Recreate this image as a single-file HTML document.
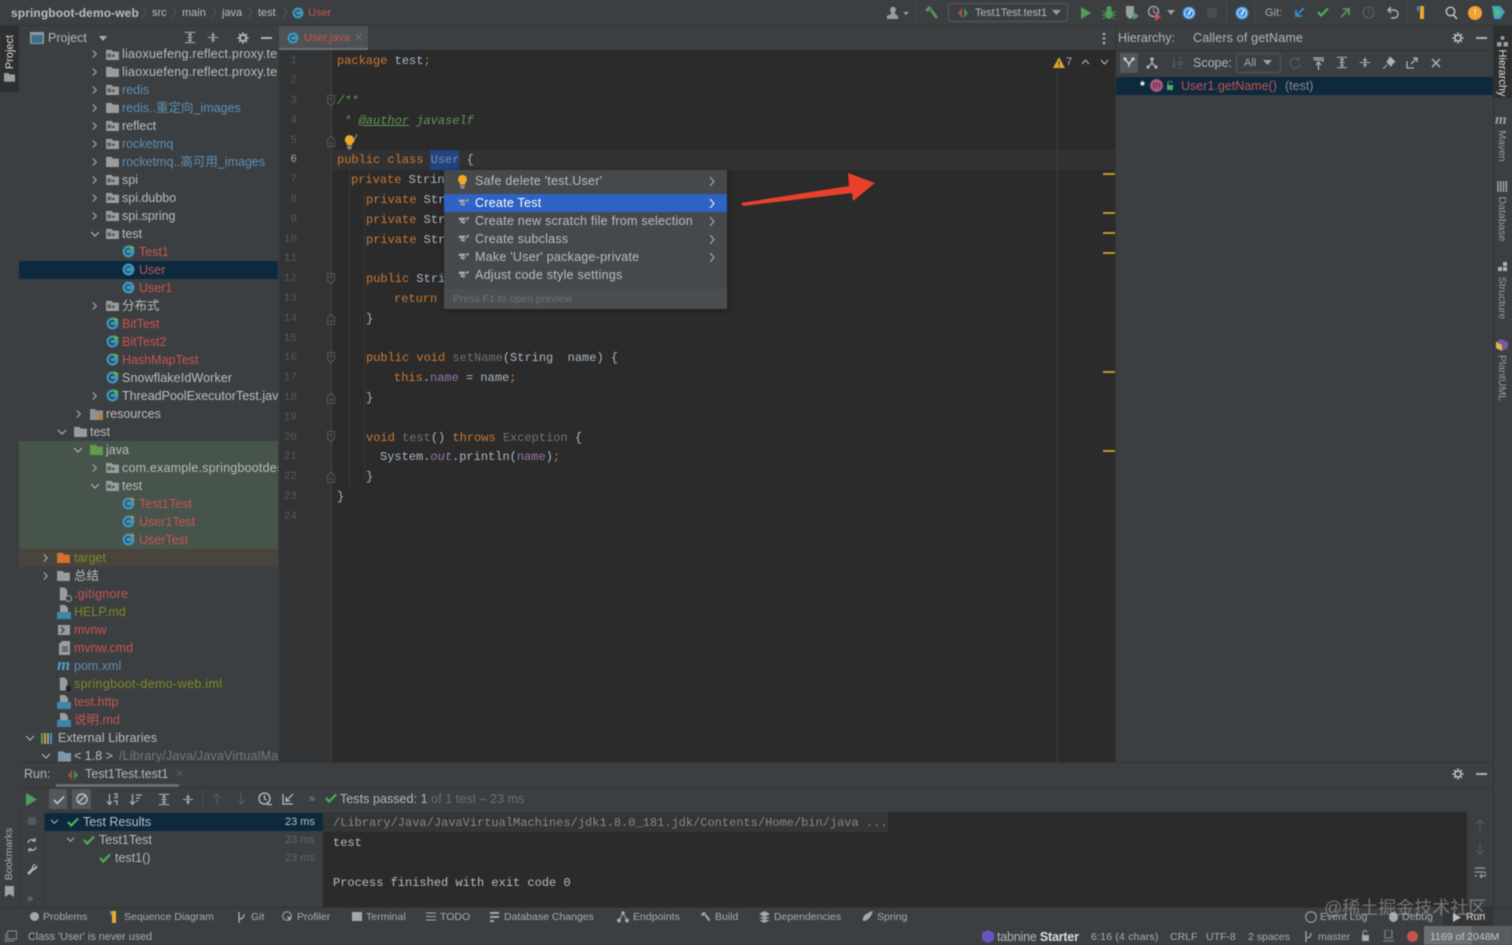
<!DOCTYPE html>
<html><head><meta charset="utf-8"><title>User.java</title>
<style>
html,body{margin:0;padding:0;background:#3c3f41;}
#a{position:relative;width:1512px;height:945px;overflow:hidden;background:#3c3f41;font-family:"Liberation Sans","Noto Sans CJK SC",sans-serif;font-size:12.5px;color:#bbb;filter:blur(.45px);}
#a div,#a svg.i{position:absolute;}
.t{white-space:pre;height:18px;line-height:18px;}
.u{letter-spacing:.25px;}
.m{white-space:pre;height:20px;line-height:20px;font-family:"Liberation Mono",monospace;font-size:12px;color:#a9b7c6;margin-top:1px;}
.n{width:30px;text-align:right;left:267px;font-size:11px;color:#55595b;font-family:"Liberation Mono",monospace;height:20px;line-height:20px;margin-top:1px;}
.k{color:#cc7832;}.g{color:#6f7375;}.p{color:#9876aa;}
.r{color:#c75450;}.b{color:#5e8eb4;}.o{color:#7f8b1e;}
.s{font-size:11px;}
.d{color:#777;}
</style></head><body><div id="a">
<svg width="0" height="0" style="position:absolute"><defs>
<symbol id="f" viewBox="0 0 14 12"><path d="M0 1h6l1.500 1.800H14V12H0z" fill="#9a9d9f"/></symbol>
<symbol id="pk" viewBox="0 0 14 12"><path d="M0 1h6l1.500 1.800H14V12H0z" fill="#9a9d9f"/><rect x="1.500" y="5" width="4" height="4" fill="#5a5d5f"/><circle cx="8" cy="7.500" r="1.300" fill="#3c3f41"/></symbol>
<symbol id="c" viewBox="0 0 14 14"><circle cx="7" cy="7" r="6.400" fill="#3f96bd"/><path d="M9.300 5.200A3 3 0 1 0 9.300 8.800" fill="none" stroke="#20404f" stroke-width="1.200"/></symbol>
<symbol id="cr" viewBox="0 0 14 14"><circle cx="7" cy="7" r="6.400" fill="#3f96bd"/><path d="M9.300 5.200A3 3 0 1 0 9.300 8.800" fill="none" stroke="#20404f" stroke-width="1.200"/><path d="M9 0l5 3-5 3z" fill="#62b543"/></symbol>
<symbol id="cu" viewBox="0 0 14 14"><circle cx="7" cy="7" r="6.400" fill="#3f96bd"/><path d="M9.300 5.200A3 3 0 1 0 9.300 8.800" fill="none" stroke="#20404f" stroke-width="1.200"/><path d="M10 0l4 2.500-4 2.500z" fill="#c98a3a"/></symbol>
<symbol id="cr2" viewBox="0 0 14 14"><circle cx="7" cy="7" r="6.400" fill="#3f96bd"/><path d="M9.300 5.200A3 3 0 1 0 9.300 8.800" fill="none" stroke="#1c3a48" stroke-width="1.600"/><path d="M9 0l5 3-5 3z" fill="#62b543"/></symbol>
<symbol id="rr" viewBox="0 0 8 10"><path d="M2 1l4 4-4 4" fill="none" stroke="#aeb2b4" stroke-width="1.200"/></symbol>
<symbol id="dd" viewBox="0 0 10 8"><path d="M1 2l4 4 4-4" fill="none" stroke="#aeb2b4" stroke-width="1.200"/></symbol>
<symbol id="fl" viewBox="0 0 14 14"><path d="M2 0h5l3 3v11H2z" fill="#9a9d9f"/></symbol>
<symbol id="md" viewBox="0 0 14 14"><path d="M3 0h5l3 3v4H3z" fill="#9a9d9f"/><rect x="0" y="7" width="14" height="7" fill="#3f86a8"/></symbol>
<symbol id="w" viewBox="0 0 14 14"><path d="M1 3h9l3-1-1 3-3 1-2 5-2-2H2l3-3H1z" fill="#a9adaf"/><path d="M10 3L6 8" stroke="#3c3f41" stroke-width="1"/></symbol>
<symbol id="bulb" viewBox="0 0 12 16"><path d="M6 0a5 5 0 0 1 3 9v2H3V9a5 5 0 0 1 3-9z" fill="#f2a62a"/><rect x="3.500" y="12" width="5" height="1.500" fill="#a9a9a9"/><rect x="4" y="14" width="4" height="1.300" fill="#a9a9a9"/></symbol>
<symbol id="ck" viewBox="0 0 12 10"><path d="M1 5l3.200 3.500L11 1.500" fill="none" stroke="#4eaf5a" stroke-width="2.200"/></symbol>
<symbol id="fold" viewBox="0 0 10 12"><path d="M1.500 .5h7v7L5 11 1.500 7.500z" fill="none" stroke="#55595b"/><path d="M3 4h4" stroke="#55595b"/></symbol>
<symbol id="foldc" viewBox="0 0 10 12"><path d="M1.500 11.500h7v-7L5 1 1.500 4.500z" fill="none" stroke="#55595b"/><path d="M3 8h4" stroke="#55595b"/></symbol>
<symbol id="exp" viewBox="0 0 14 14"><path d="M1 1h12M1 13h12M4 7h6M7 2.500v9M5 4.500l2-2 2 2M5 9.500l2 2 2-2" fill="none" stroke="#afb1b3" stroke-width="1.200"/></symbol>
<symbol id="col" viewBox="0 0 14 14"><path d="M1 7h12M7 1v4M7 9v4M5 3.500l2 2 2-2M5 10.500l2-2 2 2" fill="none" stroke="#afb1b3" stroke-width="1.200"/></symbol>
<symbol id="gear" viewBox="0 0 14 14"><circle cx="7" cy="7" r="3.500" fill="none" stroke="#afb1b3" stroke-width="2.200"/><path d="M7 .5v2.500M7 11v2.500M.5 7H3M11 7h2.500M2.400 2.400l1.800 1.800M9.800 9.800l1.800 1.800M2.400 11.600l1.800-1.800M9.800 4.200l1.800-1.800" stroke="#afb1b3" stroke-width="2"/></symbol>
</defs></svg>

<!-- title / nav bar -->
<div style="left:0;top:0;width:1512px;height:25px;background:#3c3f41;border-bottom:1px solid #323232"></div>
<div class="t" style="left:11px;top:4px;font-weight:bold;font-size:12px;letter-spacing:.1px;color:#bbb">springboot-demo-web</div>
<div class="t s" style="left:152px;top:4px">src</div>
<div class="t s" style="left:182px;top:4px">main</div>
<div class="t s" style="left:222px;top:4px">java</div>
<div class="t s" style="left:258px;top:4px">test</div>
<svg class="i" style="left:141px;top:7px" width="6" height="11" viewBox="0 0 6 11"><path d="M1 0l4 5.500L1 11" fill="none" stroke="#555"/></svg>
<svg class="i" style="left:171px;top:7px" width="6" height="11" viewBox="0 0 6 11"><path d="M1 0l4 5.500L1 11" fill="none" stroke="#555"/></svg>
<svg class="i" style="left:211px;top:7px" width="6" height="11" viewBox="0 0 6 11"><path d="M1 0l4 5.500L1 11" fill="none" stroke="#555"/></svg>
<svg class="i" style="left:247px;top:7px" width="6" height="11" viewBox="0 0 6 11"><path d="M1 0l4 5.500L1 11" fill="none" stroke="#555"/></svg>
<svg class="i" style="left:282px;top:7px" width="6" height="11" viewBox="0 0 6 11"><path d="M1 0l4 5.500L1 11" fill="none" stroke="#555"/></svg>
<svg class="i" style="left:292px;top:7px" width="12" height="12"><use href="#c"/></svg>
<div class="t s r" style="left:308px;top:4px">User</div>

<!-- toolbar right -->
<svg class="i" style="left:885px;top:6px" width="26" height="14" viewBox="0 0 26 14"><path d="M2 13v-3l4-2V6a3 3 0 1 1 4 0v2l3 2v3z" fill="#9a9d9f"/><path d="M18 6h6l-3 3z" fill="#9a9d9f"/></svg>
<div style="left:916px;top:3px;width:1px;height:19px;background:#4a4d4f"></div>
<svg class="i" style="left:924px;top:5px" width="15" height="15" viewBox="0 0 15 15"><path d="M1 5l4-4 3 2-4 4zM6 6l2-2 6 8-2 2z" fill="#4e9a58"/></svg>
<div style="left:948px;top:3px;width:118px;height:17px;border:1px solid #56595b;border-radius:3px"></div>
<svg class="i" style="left:958px;top:8px" width="10" height="10" viewBox="0 0 10 10"><path d="M4 0v10L0 5z" fill="#a8563a"/><path d="M6 0v10l4-5z" fill="#4e8a58"/></svg>
<div class="t s" style="left:975px;top:4px;color:#b5b5b5;font-size:10.800px">Test1Test.test1</div>
<svg class="i" style="left:1052px;top:10px" width="9" height="6"><path d="M0 0h9L4.500 5z" fill="#9a9d9f"/></svg>
<svg class="i" style="left:1080px;top:6px" width="12" height="14"><path d="M1 1l10 6-10 6z" fill="#4f9e5a"/></svg>
<svg class="i" style="left:1102px;top:5px" width="14" height="15" viewBox="0 0 14 15"><ellipse cx="7" cy="9" rx="4" ry="5" fill="#4e9a58"/><circle cx="7" cy="3.500" r="2.500" fill="#4e9a58"/><path d="M0 6l3 2M14 6l-3 2M0 10h3M14 10h-3M1 14l2-2M13 14l-2-2" stroke="#4e9a58"/></svg>
<svg class="i" style="left:1125px;top:5px" width="15" height="16" viewBox="0 0 15 16"><path d="M1 1h8v7c0 3-2 5-4 6-2-1-4-3-4-6z" fill="#9a9d9f"/><path d="M8 7l6 4-6 4z" fill="#4f9e5a"/></svg>
<svg class="i" style="left:1147px;top:5px" width="15" height="16" viewBox="0 0 15 16"><circle cx="6.500" cy="6.500" r="5" fill="none" stroke="#9a9d9f" stroke-width="1.500"/><path d="M6.500 3v4l3 1" fill="none" stroke="#9a9d9f"/><path d="M8 8l6 4-6 4z" fill="#c75450"/></svg>
<svg class="i" style="left:1167px;top:10px" width="8" height="5"><path d="M0 0h8L4 5z" fill="#9a9d9f"/></svg>
<svg class="i" style="left:1182px;top:6px" width="14" height="14" viewBox="0 0 14 14"><circle cx="7" cy="7" r="6.500" fill="#3d8fdb"/><circle cx="7" cy="7" r="4.500" fill="none" stroke="#cfe4f5"/><path d="M9 4L6 9" stroke="#fff" stroke-width="1.300"/></svg>
<div style="left:1207px;top:8px;width:10px;height:10px;background:#4a4d4f"></div>
<div style="left:1226px;top:3px;width:1px;height:19px;background:#4a4d4f"></div>
<svg class="i" style="left:1235px;top:6px" width="14" height="14" viewBox="0 0 14 14"><circle cx="7" cy="7" r="6.500" fill="#3d8fdb"/><circle cx="7" cy="7" r="4.500" fill="none" stroke="#cfe4f5"/><path d="M9 4L6 9" stroke="#fff" stroke-width="1.300"/></svg>
<div style="left:1254px;top:3px;width:1px;height:19px;background:#4a4d4f"></div>
<div class="t s" style="left:1265px;top:4px;color:#aaa">Git:</div>
<svg class="i" style="left:1294px;top:7px" width="11" height="11" viewBox="0 0 11 11"><path d="M10 1L2 9M2 3v6h6" fill="none" stroke="#3b8cc4" stroke-width="1.800"/></svg>
<svg class="i" style="left:1317px;top:7px" width="12" height="10"><use href="#ck"/></svg>
<svg class="i" style="left:1340px;top:7px" width="11" height="11" viewBox="0 0 11 11"><path d="M1 10l8-8M3 2h6v6" fill="none" stroke="#4e9a58" stroke-width="1.800"/></svg>
<svg class="i" style="left:1362px;top:6px" width="13" height="13" viewBox="0 0 13 13"><circle cx="6.500" cy="6.500" r="5.500" fill="none" stroke="#5a5d5f" stroke-width="1.300"/><path d="M6.500 3v4l2 1" fill="none" stroke="#5a5d5f"/></svg>
<svg class="i" style="left:1386px;top:6px" width="13" height="13" viewBox="0 0 13 13"><path d="M3 4h5a3.500 3.500 0 0 1 0 8H5M5 1L2 4l3 3" fill="none" stroke="#afb1b3" stroke-width="1.400"/></svg>
<div style="left:1407px;top:3px;width:1px;height:19px;background:#4a4d4f"></div>
<div style="left:1420px;top:6px;width:4px;height:13px;background:#e8a92f"></div>
<div style="left:1417px;top:6px;width:2px;height:5px;background:#3d8fdb"></div>
<svg class="i" style="left:1445px;top:6px" width="13" height="14" viewBox="0 0 13 14"><circle cx="5.500" cy="5.500" r="4.300" fill="none" stroke="#c3c5c7" stroke-width="1.400"/><path d="M8.500 9l3.500 4" stroke="#c3c5c7" stroke-width="1.600"/></svg>
<div style="left:1468px;top:6px;width:14px;height:14px;border-radius:50%;background:#f0a232;color:#fff;text-align:center;font-size:10px;line-height:14px;font-weight:bold">↑</div>
<svg class="i" style="left:1491px;top:5px" width="15" height="16" viewBox="0 0 15 16"><path d="M1 1h8l5 6-5 7H3z" fill="#3fa4c9"/><path d="M3 3l8 4-6 5z" fill="#52c26f"/></svg>

<!-- left strip -->
<div style="left:0;top:26px;width:19px;height:881px;background:#3c3f41;border-right:1px solid #323232"></div>
<div style="left:0;top:26px;width:19px;height:66px;background:#2d2f30"></div>
<div class="t" style="left:-12px;top:43px;width:44px;text-align:center;transform:rotate(-90deg);font-size:11px;color:#ddd">Project</div>
<svg class="i" style="left:4px;top:72px" width="11" height="10"><use href="#f"/></svg>
<div class="t" style="left:-21px;top:845px;width:60px;text-align:center;transform:rotate(-90deg);font-size:10.500px;color:#aaa">Bookmarks</div>
<svg class="i" style="left:5px;top:886px" width="9" height="11" viewBox="0 0 9 11"><path d="M0 0h9v11L4.500 8 0 11z" fill="#a0a3a5"/></svg>

<!-- project header -->
<div style="left:19px;top:26px;width:260px;height:24px;background:#3c3f41;border-bottom:1px solid #333"></div>
<svg class="i" style="left:30px;top:32px" width="14" height="12" viewBox="0 0 14 12"><rect width="14" height="12" fill="#8d9aa3"/><rect x="1.500" y="3" width="11" height="8" fill="#3d6f8a"/></svg>
<div class="t" style="left:48px;top:29px;color:#b5b5b5;font-size:12.500px">Project</div>
<svg class="i" style="left:99px;top:36px" width="8" height="5"><path d="M0 0h8L4 5z" fill="#aaa"/></svg>
<svg class="i" style="left:184px;top:31px" width="12" height="13"><use href="#exp"/></svg>
<svg class="i" style="left:207px;top:31px" width="12" height="13"><use href="#col"/></svg>
<svg class="i" style="left:237px;top:32px" width="12" height="12"><use href="#gear"/></svg>
<div style="left:261px;top:37px;width:11px;height:2px;background:#afb1b3"></div>

<!-- tree backgrounds -->
<div style="left:19px;top:50px;width:259px;height:712px;background:#3c3f41"></div>
<div style="left:19px;top:261px;width:259px;height:18px;background:#0d293e"></div>
<div style="left:19px;top:441px;width:259px;height:108px;background:#47544b"></div>
<div style="left:19px;top:549px;width:259px;height:18px;background:#49443c"></div>

<!-- tree rows -->
<svg class="i" style="left:91px;top:49px" width="7" height="10"><use href="#rr"/></svg><svg class="i" style="left:106px;top:49px" width="13" height="11"><use href="#pk"/></svg><div class="t" style="left:122px;top:45px;width:156px;overflow:hidden;letter-spacing:.25px">liaoxuefeng.reflect.proxy.test</div>
<svg class="i" style="left:91px;top:67px" width="7" height="10"><use href="#rr"/></svg><svg class="i" style="left:106px;top:66px" width="13" height="11"><use href="#f"/></svg><div class="t" style="left:122px;top:63px;width:156px;overflow:hidden;letter-spacing:.25px">liaoxuefeng.reflect.proxy.test</div>
<svg class="i" style="left:91px;top:85px" width="7" height="10"><use href="#rr"/></svg><svg class="i" style="left:106px;top:84px" width="13" height="11"><use href="#pk"/></svg><div class="t b" style="left:122px;top:81px">redis</div>
<svg class="i" style="left:91px;top:103px" width="7" height="10"><use href="#rr"/></svg><svg class="i" style="left:106px;top:102px" width="13" height="11"><use href="#f"/></svg><div class="t b" style="left:122px;top:99px">redis..重定向_images</div>
<svg class="i" style="left:91px;top:121px" width="7" height="10"><use href="#rr"/></svg><svg class="i" style="left:106px;top:120px" width="13" height="11"><use href="#pk"/></svg><div class="t" style="left:122px;top:117px">reflect</div>
<svg class="i" style="left:91px;top:139px" width="7" height="10"><use href="#rr"/></svg><svg class="i" style="left:106px;top:138px" width="13" height="11"><use href="#pk"/></svg><div class="t b" style="left:122px;top:135px">rocketmq</div>
<svg class="i" style="left:91px;top:157px" width="7" height="10"><use href="#rr"/></svg><svg class="i" style="left:106px;top:156px" width="13" height="11"><use href="#f"/></svg><div class="t b" style="left:122px;top:153px">rocketmq..高可用_images</div>
<svg class="i" style="left:91px;top:175px" width="7" height="10"><use href="#rr"/></svg><svg class="i" style="left:106px;top:174px" width="13" height="11"><use href="#pk"/></svg><div class="t" style="left:122px;top:171px">spi</div>
<svg class="i" style="left:91px;top:193px" width="7" height="10"><use href="#rr"/></svg><svg class="i" style="left:106px;top:192px" width="13" height="11"><use href="#pk"/></svg><div class="t" style="left:122px;top:189px">spi.dubbo</div>
<svg class="i" style="left:91px;top:211px" width="7" height="10"><use href="#rr"/></svg><svg class="i" style="left:106px;top:210px" width="13" height="11"><use href="#pk"/></svg><div class="t" style="left:122px;top:207px">spi.spring</div>
<svg class="i" style="left:90px;top:230px" width="10" height="8"><use href="#dd"/></svg><svg class="i" style="left:106px;top:228px" width="13" height="11"><use href="#pk"/></svg><div class="t" style="left:122px;top:225px">test</div>
<svg class="i" style="left:122px;top:245px" width="13" height="13"><use href="#cr"/></svg><div class="t r" style="left:139px;top:243px">Test1</div>
<svg class="i" style="left:122px;top:263px" width="13" height="13"><use href="#c"/></svg><div class="t r" style="left:139px;top:261px">User</div>
<svg class="i" style="left:122px;top:281px" width="13" height="13"><use href="#c"/></svg><div class="t r" style="left:139px;top:279px">User1</div>
<svg class="i" style="left:91px;top:301px" width="7" height="10"><use href="#rr"/></svg><svg class="i" style="left:106px;top:300px" width="13" height="11"><use href="#pk"/></svg><div class="t" style="left:122px;top:297px">分布式</div>
<svg class="i" style="left:106px;top:317px" width="13" height="13"><use href="#cr2"/></svg><div class="t r" style="left:122px;top:315px">BitTest</div>
<svg class="i" style="left:106px;top:335px" width="13" height="13"><use href="#cr2"/></svg><div class="t r" style="left:122px;top:333px">BitTest2</div>
<svg class="i" style="left:106px;top:353px" width="13" height="13"><use href="#cr2"/></svg><div class="t r" style="left:122px;top:351px">HashMapTest</div>
<svg class="i" style="left:106px;top:371px" width="13" height="13"><use href="#cr2"/></svg><div class="t" style="left:122px;top:369px;letter-spacing:.12px">SnowflakeIdWorker</div>
<svg class="i" style="left:91px;top:391px" width="7" height="10"><use href="#rr"/></svg><svg class="i" style="left:106px;top:389px" width="13" height="13"><use href="#cr2"/></svg><div class="t" style="left:122px;top:387px;width:156px;overflow:hidden">ThreadPoolExecutorTest.java</div>
<svg class="i" style="left:75px;top:409px" width="7" height="10"><use href="#rr"/></svg><svg class="i" style="left:90px;top:408px" width="13" height="12" viewBox="0 0 13 12"><path d="M0 1h5l1 1.500h7V12H0z" fill="#8f9294"/><rect x="8" y="6" width="5" height="6" fill="#b9803e"/></svg><div class="t" style="left:106px;top:405px">resources</div>
<svg class="i" style="left:57px;top:428px" width="10" height="8"><use href="#dd"/></svg><svg class="i" style="left:74px;top:426px" width="13" height="11"><use href="#f"/></svg><div class="t" style="left:90px;top:423px">test</div>
<svg class="i" style="left:73px;top:446px" width="10" height="8"><use href="#dd"/></svg><svg class="i" style="left:90px;top:444px" width="13" height="11" viewBox="0 0 14 12"><path d="M0 1h6l1.500 1.800H14V12H0z" fill="#5f9c4f"/></svg><div class="t" style="left:106px;top:441px">java</div>
<svg class="i" style="left:91px;top:463px" width="7" height="10"><use href="#rr"/></svg><svg class="i" style="left:106px;top:462px" width="13" height="11"><use href="#pk"/></svg><div class="t" style="left:122px;top:459px;width:156px;overflow:hidden;letter-spacing:.2px">com.example.springbootdemo</div>
<svg class="i" style="left:90px;top:482px" width="10" height="8"><use href="#dd"/></svg><svg class="i" style="left:106px;top:480px" width="13" height="11"><use href="#pk"/></svg><div class="t" style="left:122px;top:477px">test</div>
<svg class="i" style="left:122px;top:497px" width="13" height="13"><use href="#cu"/></svg><div class="t r" style="left:139px;top:495px">Test1Test</div>
<svg class="i" style="left:122px;top:515px" width="13" height="13"><use href="#cu"/></svg><div class="t r" style="left:139px;top:513px">User1Test</div>
<svg class="i" style="left:122px;top:533px" width="13" height="13"><use href="#cu"/></svg><div class="t r" style="left:139px;top:531px">UserTest</div>
<svg class="i" style="left:42px;top:553px" width="7" height="10"><use href="#rr"/></svg><svg class="i" style="left:57px;top:552px" width="13" height="11" viewBox="0 0 14 12"><path d="M0 1h6l1.500 1.800H14V12H0z" fill="#d8702d"/></svg><div class="t o" style="left:74px;top:549px">target</div>
<svg class="i" style="left:42px;top:571px" width="7" height="10"><use href="#rr"/></svg><svg class="i" style="left:57px;top:570px" width="13" height="11"><use href="#f"/></svg><div class="t" style="left:74px;top:567px">总结</div>
<svg class="i" style="left:58px;top:587px" width="13" height="14"><use href="#fl"/></svg><svg class="i" style="left:65px;top:595px" width="7" height="7"><circle cx="3.500" cy="3.500" r="3" fill="#3c3f41" stroke="#9a9d9f"/></svg><div class="t r" style="left:74px;top:585px;letter-spacing:.3px">.gitignore</div>
<svg class="i" style="left:57px;top:605px" width="14" height="14"><use href="#md"/></svg><div class="t o" style="left:74px;top:603px">HELP.md</div>
<svg class="i" style="left:58px;top:625px" width="12" height="10" viewBox="0 0 12 10"><rect width="12" height="10" fill="#9a9d9f"/><path d="M3 2l3 3-3 3" fill="none" stroke="#3c3f41" stroke-width="1.300"/></svg><div class="t r" style="left:74px;top:621px">mvnw</div>
<svg class="i" style="left:59px;top:641px" width="11" height="14" viewBox="0 0 11 14"><path d="M3 0h8v14H0V3z" fill="#9a9d9f"/><path d="M3 6h6M3 8h6M3 10h6" stroke="#3c3f41"/></svg><div class="t r" style="left:74px;top:639px">mvnw.cmd</div>
<div class="t" style="left:57px;top:656px;font-family:'Liberation Serif',serif;font-style:italic;font-weight:bold;font-size:17px;color:#4a9fc4">m</div><div class="t b" style="left:74px;top:657px">pom.xml</div>
<svg class="i" style="left:58px;top:677px" width="13" height="14"><use href="#fl"/></svg><div style="left:66px;top:686px;width:5px;height:5px;background:#222"></div><div class="t o" style="left:74px;top:675px;letter-spacing:.35px">springboot-demo-web.iml</div>
<svg class="i" style="left:57px;top:695px" width="14" height="14"><use href="#md"/></svg><div class="t r" style="left:74px;top:693px">test.http</div>
<svg class="i" style="left:57px;top:713px" width="14" height="14"><use href="#md"/></svg><div class="t r" style="left:74px;top:711px">说明.md</div>
<svg class="i" style="left:25px;top:734px" width="10" height="8"><use href="#dd"/></svg><svg class="i" style="left:41px;top:732px" width="14" height="12" viewBox="0 0 14 12"><path d="M1 1v11" stroke="#5f9c4f" stroke-width="2"/><path d="M4 1v11" stroke="#cfa03f" stroke-width="2"/><path d="M7 1v11" stroke="#9a9d9f" stroke-width="2"/><path d="M10 1v11" stroke="#3f96bd" stroke-width="2"/></svg><div class="t" style="left:58px;top:729px;letter-spacing:.1px">External Libraries</div>
<svg class="i" style="left:41px;top:752px" width="10" height="8"><use href="#dd"/></svg><svg class="i" style="left:58px;top:750px" width="13" height="12" viewBox="0 0 14 12"><path d="M0 1h6l1.500 1.800H14V12H0z" fill="#7f97a8"/></svg><div class="t" style="left:74px;top:747px">&lt; 1.8 &gt;</div><div class="t d" style="left:119px;top:747px;width:159px;overflow:hidden;letter-spacing:.2px">/Library/Java/JavaVirtualMachines</div>

<!-- editor tabs -->
<div style="left:279px;top:26px;width:836px;height:24px;background:#3c3f41;border-bottom:1px solid #323232"></div>
<div style="left:279px;top:26px;width:89px;height:22px;background:#4e5254;border-bottom:3px solid #6b6f71"></div>
<svg class="i" style="left:287px;top:32px" width="12" height="12"><use href="#c"/></svg>
<div class="t s r" style="left:304px;top:29px">User.java</div>
<div class="t s" style="left:354px;top:29px;color:#6e7173">✕</div>
<svg class="i" style="left:1102px;top:32px" width="4" height="13"><circle cx="2" cy="2" r="1.300" fill="#afb1b3"/><circle cx="2" cy="6.500" r="1.300" fill="#afb1b3"/><circle cx="2" cy="11" r="1.300" fill="#afb1b3"/></svg>

<!-- editor -->
<div style="left:279px;top:50px;width:836px;height:712px;background:#2b2b2b"></div>
<div style="left:279px;top:50px;width:52px;height:712px;background:#313335"></div>
<div style="left:331px;top:50px;width:1px;height:712px;background:#3f4143"></div>
<div style="left:332px;top:150px;width:783px;height:20px;background:#323232"></div>
<div style="left:1057px;top:72px;width:1px;height:690px;background:#3d3f41"></div>
<div style="left:349px;top:170px;width:1px;height:317px;background:#373737"></div>
<div style="left:364px;top:190px;width:1px;height:290px;background:#353535"></div>
<div style="left:430px;top:150px;width:29px;height:20px;background:#214283"></div>
<div style="left:1103px;top:173px;width:12px;height:2px;background:#c29a1f"></div>
<div style="left:1103px;top:212px;width:12px;height:2px;background:#c29a1f"></div>
<div style="left:1103px;top:232px;width:12px;height:2px;background:#c29a1f"></div>
<div style="left:1103px;top:252px;width:12px;height:2px;background:#c29a1f"></div>
<div style="left:1103px;top:371px;width:12px;height:2px;background:#c29a1f"></div>
<div style="left:1103px;top:450px;width:12px;height:2px;background:#c29a1f"></div>
<svg class="i" style="left:1053px;top:57px" width="12" height="11"><path d="M6 0l6 11H0z" fill="#d9a22e"/><path d="M6 4v4M6 9v1" stroke="#3c3f41"/></svg>
<div class="t s" style="left:1066px;top:53px;color:#aaa">7</div>
<svg class="i" style="left:1081px;top:59px" width="9" height="6"><path d="M1 5l3.500-4L8 5" fill="none" stroke="#afb1b3" stroke-width="1.100"/></svg>
<svg class="i" style="left:1100px;top:59px" width="9" height="6"><path d="M1 1l3.500 4L8 1" fill="none" stroke="#afb1b3" stroke-width="1.100"/></svg>

<!-- line numbers -->
<div class="n" style="top:50px">1</div>
<div class="n" style="top:70px">2</div>
<div class="n" style="top:90px">3</div>
<div class="n" style="top:110px">4</div>
<div class="n" style="top:130px">5</div>
<div class="n" style="top:149px;color:#a4a3a3">6</div>
<div class="n" style="top:169px">7</div>
<div class="n" style="top:189px">8</div>
<div class="n" style="top:209px">9</div>
<div class="n" style="top:229px">10</div>
<div class="n" style="top:248px">11</div>
<div class="n" style="top:268px">12</div>
<div class="n" style="top:288px">13</div>
<div class="n" style="top:308px">14</div>
<div class="n" style="top:328px">15</div>
<div class="n" style="top:347px">16</div>
<div class="n" style="top:367px">17</div>
<div class="n" style="top:387px">18</div>
<div class="n" style="top:407px">19</div>
<div class="n" style="top:427px">20</div>
<div class="n" style="top:446px">21</div>
<div class="n" style="top:466px">22</div>
<div class="n" style="top:486px">23</div>
<div class="n" style="top:506px">24</div>
<svg class="i" style="left:326px;top:95px" width="10" height="12"><use href="#fold"/></svg>
<svg class="i" style="left:326px;top:135px" width="10" height="12"><use href="#foldc"/></svg>
<svg class="i" style="left:326px;top:273px" width="10" height="12"><use href="#fold"/></svg>
<svg class="i" style="left:326px;top:313px" width="10" height="12"><use href="#foldc"/></svg>
<svg class="i" style="left:326px;top:352px" width="10" height="12"><use href="#fold"/></svg>
<svg class="i" style="left:326px;top:392px" width="10" height="12"><use href="#foldc"/></svg>
<svg class="i" style="left:326px;top:431px" width="10" height="12"><use href="#fold"/></svg>
<svg class="i" style="left:326px;top:471px" width="10" height="12"><use href="#foldc"/></svg>

<!-- code -->
<div class="m" style="left:337px;top:50px"><span class="k">package</span> test<span class="k">;</span></div>
<div class="m" style="left:337px;top:90px;color:#629755;font-style:italic">/**</div>
<div class="m" style="left:337px;top:110px;color:#629755;font-style:italic"> * <span style="text-decoration:underline">@author</span> javaself</div>
<svg class="i" style="left:344px;top:135px" width="11" height="15"><use href="#bulb"/></svg>
<svg class="i" style="left:352px;top:134px" width="6" height="10"><path d="M5 0L1 9" stroke="#9aa04a" stroke-width="1"/></svg>
<div class="m" style="left:337px;top:149px"><span class="k">public class</span> <span style="color:#7a8ea8">User</span> {</div>
<div class="m" style="left:351px;top:169px"><span class="k">private</span> Strin</div>
<div class="m" style="left:366px;top:189px"><span class="k">private</span> Str</div>
<div class="m" style="left:366px;top:209px"><span class="k">private</span> Str</div>
<div class="m" style="left:366px;top:229px"><span class="k">private</span> Str</div>
<div class="m" style="left:366px;top:268px"><span class="k">public</span> Stri</div>
<div class="m" style="left:394px;top:288px"><span class="k">return</span></div>
<div class="m" style="left:366px;top:308px">}</div>
<div class="m" style="left:366px;top:347px"><span class="k">public void</span> <span class="g">setName</span>(String  name) {</div>
<div class="m" style="left:394px;top:367px"><span class="k">this</span>.<span class="p">name</span> = name<span class="k">;</span></div>
<div class="m" style="left:366px;top:387px">}</div>
<div class="m" style="left:366px;top:427px"><span class="k">void</span> <span class="g">test</span>() <span class="k">throws</span> <span class="g">Exception</span> {</div>
<div class="m" style="left:380px;top:446px">System.<span class="p" style="font-style:italic">out</span>.println(<span class="p">name</span>)<span class="k">;</span></div>
<div class="m" style="left:366px;top:466px">}</div>
<div class="m" style="left:337px;top:486px">}</div>

<!-- popup -->
<div style="left:444px;top:170px;width:283px;height:139px;background:#46494b;box-shadow:0 1px 6px rgba(0,0,0,.35)"></div>
<div style="left:444px;top:289px;width:283px;height:20px;background:#4b4e50"></div>
<div style="left:444px;top:194px;width:283px;height:18px;background:#2e62c4"></div>
<svg class="i" style="left:457px;top:175px" width="11" height="14"><use href="#bulb"/></svg>
<div class="t u" style="left:475px;top:172px;color:#bbb">Safe delete 'test.User'</div>
<svg class="i" style="left:458px;top:197px" width="12" height="12"><use href="#w"/></svg>
<div class="t u" style="left:475px;top:194px;color:#fff">Create Test</div>
<svg class="i" style="left:458px;top:215px" width="12" height="12"><use href="#w"/></svg>
<div class="t u" style="left:475px;top:212px">Create new scratch file from selection</div>
<svg class="i" style="left:458px;top:233px" width="12" height="12"><use href="#w"/></svg>
<div class="t u" style="left:475px;top:230px">Create subclass</div>
<svg class="i" style="left:458px;top:251px" width="12" height="12"><use href="#w"/></svg>
<div class="t u" style="left:475px;top:248px">Make 'User' package-private</div>
<svg class="i" style="left:458px;top:269px" width="12" height="12"><use href="#w"/></svg>
<div class="t u" style="left:475px;top:266px">Adjust code style settings</div>
<div class="t" style="left:453px;top:290px;font-size:10.500px;color:#6f7274">Press F1 to open preview</div>
<svg class="i" style="left:709px;top:177px" width="6" height="9"><path d="M1 0l4 4.500L1 9" fill="none" stroke="#aeb2b4"/></svg>
<svg class="i" style="left:709px;top:199px" width="6" height="9"><path d="M1 0l4 4.500L1 9" fill="none" stroke="#fff"/></svg>
<svg class="i" style="left:709px;top:217px" width="6" height="9"><path d="M1 0l4 4.500L1 9" fill="none" stroke="#aeb2b4"/></svg>
<svg class="i" style="left:709px;top:235px" width="6" height="9"><path d="M1 0l4 4.500L1 9" fill="none" stroke="#aeb2b4"/></svg>
<svg class="i" style="left:709px;top:253px" width="6" height="9"><path d="M1 0l4 4.500L1 9" fill="none" stroke="#aeb2b4"/></svg>
<svg class="i" style="left:741px;top:172px" width="135" height="34" viewBox="0 0 135 34"><path d="M0 31L108 14 107 1 134 11 112 29 111 21 2 34z" fill="#e8402a"/></svg>

<!-- hierarchy panel -->
<div style="left:1115px;top:26px;width:1px;height:736px;background:#323232"></div>
<div style="left:1116px;top:26px;width:377px;height:24px;border-bottom:1px solid #333"></div>
<div class="t" style="left:1118px;top:29px;color:#b5b5b5">Hierarchy:</div>
<div class="t" style="left:1193px;top:29px;color:#b5b5b5;letter-spacing:.17px">Callers of getName</div>
<svg class="i" style="left:1452px;top:32px" width="12" height="12"><use href="#gear"/></svg>
<div style="left:1476px;top:37px;width:11px;height:2px;background:#afb1b3"></div>
<div style="left:1120px;top:53px;width:18px;height:20px;background:#55585a;border-radius:2px"></div>
<svg class="i" style="left:1123px;top:57px" width="12" height="12" viewBox="0 0 12 12"><path d="M2 2l4 5 4-5M6 7v3" fill="none" stroke="#c9cbcc" stroke-width="1.500"/><circle cx="2" cy="2" r="1.600" fill="#c9cbcc"/><circle cx="10" cy="2" r="1.600" fill="#c9cbcc"/></svg>
<svg class="i" style="left:1146px;top:57px" width="12" height="12" viewBox="0 0 12 12"><path d="M6 2v4L2 10M6 6l4 4" fill="none" stroke="#afb1b3" stroke-width="1.400"/><circle cx="6" cy="2" r="1.800" fill="#afb1b3"/><circle cx="2" cy="10" r="1.600" fill="#afb1b3"/><circle cx="10" cy="10" r="1.600" fill="#afb1b3"/></svg>
<svg class="i" style="left:1171px;top:57px" width="12" height="12" viewBox="0 0 12 12"><path d="M3 1v9M1 8l2 2 2-2M8 1h3M8 5h3v3H8zM8 11h3" fill="none" stroke="#56595b" stroke-width="1.200"/></svg>
<div class="t" style="left:1193px;top:54px;color:#b5b5b5">Scope:</div>
<div style="left:1236px;top:53px;width:43px;height:18px;border:1px solid #56595b;border-radius:3px"></div>
<div class="t s" style="left:1244px;top:54px;color:#aaa">All</div>
<svg class="i" style="left:1263px;top:60px" width="9" height="6"><path d="M0 0h9L4.500 5z" fill="#a0a3a5"/></svg>
<svg class="i" style="left:1289px;top:57px" width="12" height="12" viewBox="0 0 12 12"><path d="M10 3A5 5 0 1 0 11 7M10 0v3H7" fill="none" stroke="#56595b" stroke-width="1.300"/></svg>
<svg class="i" style="left:1312px;top:57px" width="13" height="13" viewBox="0 0 13 13"><path d="M1 1h11M2 3h9v2M6.500 13V5M4 8l2.500-3L9 8" fill="none" stroke="#afb1b3" stroke-width="1.300"/></svg>
<svg class="i" style="left:1336px;top:56px" width="12" height="13"><use href="#exp"/></svg>
<svg class="i" style="left:1359px;top:56px" width="12" height="13"><use href="#col"/></svg>
<svg class="i" style="left:1383px;top:57px" width="12" height="12" viewBox="0 0 12 12"><path d="M7 0l5 5-2 1-2 3-4-4 2-3zM4 8l-4 4" fill="#afb1b3" stroke="#afb1b3"/></svg>
<svg class="i" style="left:1406px;top:57px" width="12" height="12" viewBox="0 0 12 12"><path d="M1 4v7h7M5 7l6-6M7 1h4v4" fill="none" stroke="#afb1b3" stroke-width="1.300"/></svg>
<svg class="i" style="left:1431px;top:58px" width="10" height="10"><path d="M1 1l8 8M9 1L1 9" stroke="#afb1b3" stroke-width="1.500"/></svg>
<div style="left:1116px;top:77px;width:377px;height:18px;background:#0d293e"></div>
<div class="t" style="left:1140px;top:77px;color:#fff;font-weight:bold">*</div>
<div style="left:1150px;top:79px;width:13px;height:13px;border-radius:50%;background:#a8567a;color:#4a2a38;font-size:9px;line-height:12px;text-align:center">m</div>
<svg class="i" style="left:1166px;top:81px" width="8" height="9" viewBox="0 0 8 9"><path d="M2 4V2a2 2 0 0 1 4 0" fill="none" stroke="#58a868"/><rect x="1" y="4" width="6" height="5" fill="#58a868"/></svg>
<div class="t r" style="left:1181px;top:77px">User1.getName()</div>
<div class="t d" style="left:1285px;top:77px;color:#888">(test)</div>

<!-- right strip -->
<div style="left:1493px;top:26px;width:19px;height:881px;background:#3c3f41;border-left:1px solid #323232"></div>
<div style="left:1494px;top:26px;width:18px;height:72px;background:#2d2f30"></div>
<svg class="i" style="left:1497px;top:36px" width="11" height="11" viewBox="0 0 11 11"><circle cx="5.500" cy="2" r="2" fill="#9a9d9f"/><rect x="0" y="6" width="4.500" height="4.500" fill="#9a9d9f"/><rect x="6.500" y="6" width="4.500" height="4.500" fill="#9a9d9f"/></svg>
<div class="t" style="left:1473px;top:64px;width:58px;text-align:center;transform:rotate(90deg);font-size:11px;color:#ddd">Hierarchy</div>
<div class="t" style="left:1495px;top:111px;font-family:'Liberation Serif',serif;font-style:italic;font-weight:bold;font-size:15px;color:#9a9d9f">m</div>
<div class="t" style="left:1478px;top:137px;width:48px;text-align:center;transform:rotate(90deg);font-size:10.500px;color:#9a9d9f">Maven</div>
<svg class="i" style="left:1497px;top:181px" width="11" height="11" viewBox="0 0 11 11"><path d="M1 0v11M3.700 0v11M6.500 0v11M9.300 0v11" stroke="#9a9d9f" stroke-width="1.600"/></svg>
<div class="t" style="left:1473px;top:210px;width:58px;text-align:center;transform:rotate(90deg);font-size:10.500px;color:#9a9d9f">Database</div>
<svg class="i" style="left:1498px;top:262px" width="9" height="9" viewBox="0 0 9 9"><rect x="5" width="4" height="4" fill="#b0b3b5"/><rect y="5" width="4" height="4" fill="#b0b3b5"/><rect x="5" y="5" width="4" height="4" fill="#b0b3b5"/></svg>
<div class="t" style="left:1473px;top:289px;width:58px;text-align:center;transform:rotate(90deg);font-size:10.500px;color:#9a9d9f">Structure</div>
<svg class="i" style="left:1496px;top:339px" width="12" height="12" viewBox="0 0 12 12"><path d="M0 3l5-3 7 3v6l-6 3-6-3z" fill="#7a5a9a"/><path d="M0 3l6 3v6l-6-3z" fill="#e0b94a"/></svg>
<div class="t" style="left:1473px;top:369px;width:58px;text-align:center;transform:rotate(90deg);font-size:10.500px;color:#9a9d9f">PlantUML</div>

<!-- run header -->
<div style="left:19px;top:762px;width:1474px;height:1px;background:#323232"></div>
<div style="left:19px;top:763px;width:1474px;height:24px;background:#3c3f41;border-bottom:1px solid #333"></div>
<div class="t" style="left:24px;top:765px;color:#b5b5b5">Run:</div>
<svg class="i" style="left:68px;top:770px" width="10" height="10" viewBox="0 0 10 10"><path d="M4 0v10L0 5z" fill="#a8563a"/><path d="M6 0v10l4-5z" fill="#4e8a58"/></svg>
<div class="t" style="left:85px;top:765px;color:#b5b5b5">Test1Test.test1</div>
<div class="t s" style="left:175px;top:765px;color:#5c5f61">✕</div>
<div style="left:56px;top:784px;width:123px;height:3px;background:#6b6f71"></div>
<svg class="i" style="left:1452px;top:768px" width="12" height="12"><use href="#gear"/></svg>
<div style="left:1476px;top:773px;width:11px;height:2px;background:#afb1b3"></div>

<!-- run toolbar -->
<div style="left:19px;top:788px;width:1474px;height:24px;background:#3c3f41"></div>
<svg class="i" style="left:26px;top:793px" width="11" height="13"><path d="M0 0l11 6.500L0 13z" fill="#4f9e5a"/></svg>
<div style="left:49px;top:789px;width:18px;height:20px;background:#55585a;border-radius:2px"></div>
<div style="left:72px;top:789px;width:19px;height:20px;background:#55585a;border-radius:2px"></div>
<svg class="i" style="left:53px;top:795px" width="12" height="10" viewBox="0 0 12 10"><path d="M1 5l3.200 3.500L11 1.500" fill="none" stroke="#bcbec0" stroke-width="1.800"/></svg>
<svg class="i" style="left:76px;top:793px" width="12" height="12" viewBox="0 0 12 12"><circle cx="6" cy="6" r="5" fill="none" stroke="#bcbec0" stroke-width="1.400"/><path d="M2.500 9.500l7-7" stroke="#bcbec0" stroke-width="1.400"/></svg>
<svg class="i" style="left:106px;top:793px" width="13" height="13" viewBox="0 0 13 13"><path d="M3.500 1v10M1 8.500l2.500 3 2.500-3M8 1h3v3.500H8M8 8h3v4" fill="none" stroke="#afb1b3" stroke-width="1.200"/></svg>
<svg class="i" style="left:129px;top:793px" width="13" height="13" viewBox="0 0 13 13"><path d="M3.500 1v10M1 8.500l2.500 3 2.500-3M7 2h6M7 5h4M7 8h2" fill="none" stroke="#afb1b3" stroke-width="1.200"/></svg>
<svg class="i" style="left:158px;top:793px" width="12" height="13"><use href="#exp"/></svg>
<svg class="i" style="left:182px;top:793px" width="12" height="13"><use href="#col"/></svg>
<div style="left:202px;top:790px;width:1px;height:18px;background:#4a4d4f"></div>
<svg class="i" style="left:212px;top:793px" width="10" height="12"><path d="M5 12V1M1 5l4-4 4 4" fill="none" stroke="#56595b" stroke-width="1.200"/></svg>
<svg class="i" style="left:236px;top:793px" width="10" height="12"><path d="M5 0v11M1 7l4 4 4-4" fill="none" stroke="#56595b" stroke-width="1.200"/></svg>
<svg class="i" style="left:258px;top:792px" width="14" height="14" viewBox="0 0 14 14"><circle cx="6.500" cy="6.500" r="5.500" fill="none" stroke="#bcbec0" stroke-width="1.300"/><path d="M6.500 3v4l2 1M9 12.500h5" fill="none" stroke="#bcbec0" stroke-width="1.200"/></svg>
<svg class="i" style="left:282px;top:793px" width="12" height="12" viewBox="0 0 12 12"><path d="M1 1v10h10M11 1L4 8M4 4v4h4" fill="none" stroke="#bcbec0" stroke-width="1.200"/></svg>
<div class="t s" style="left:309px;top:790px;color:#8a8d8f">»</div>
<svg class="i" style="left:325px;top:793px" width="12" height="10"><use href="#ck"/></svg>
<div class="t" style="left:340px;top:790px;color:#b5b5b5;letter-spacing:.05px">Tests passed: 1 <span style="color:#6a6d6f">of 1 test – 23 ms</span></div>

<!-- left run column -->
<svg class="i" style="left:26px;top:816px" width="12" height="12" viewBox="0 0 12 12"><path d="M3 1h6l2 4-2 4H3L1 5z" fill="#56595b"/></svg>
<svg class="i" style="left:26px;top:838px" width="12" height="14" viewBox="0 0 12 14"><path d="M2 5a4 4 0 0 1 7-2M10 9a4 4 0 0 1-7 2M9 0v3H6M3 14v-3h3" fill="none" stroke="#afb1b3" stroke-width="1.300"/></svg>
<svg class="i" style="left:26px;top:863px" width="12" height="13" viewBox="0 0 12 13"><path d="M11 2L8 5 7 4l3-3a3.500 3.500 0 0 0-4 4L1 10l2 2 5-5a3.500 3.500 0 0 0 3-5z" fill="#afb1b3"/></svg>
<div class="t s" style="left:27px;top:890px;color:#8a8d8f">»</div>

<!-- tests tree -->
<div style="left:44px;top:812px;width:1px;height:95px;background:#323232"></div>
<div style="left:45px;top:812px;width:278px;height:95px;background:#3c3f41"></div>
<div style="left:45px;top:813px;width:278px;height:18px;background:#0d293e"></div>
<svg class="i" style="left:50px;top:818px" width="9" height="7"><use href="#dd"/></svg>
<svg class="i" style="left:67px;top:817px" width="12" height="10"><use href="#ck"/></svg>
<div class="t" style="left:83px;top:813px;color:#bbb">Test Results</div>
<div class="t s" style="left:285px;top:813px;color:#bbb">23 ms</div>
<svg class="i" style="left:66px;top:836px" width="9" height="7"><use href="#dd"/></svg>
<svg class="i" style="left:83px;top:835px" width="12" height="10"><use href="#ck"/></svg>
<div class="t" style="left:99px;top:831px;color:#b5b5b5">Test1Test</div>
<div class="t s" style="left:285px;top:831px;color:#606365">23 ms</div>
<svg class="i" style="left:99px;top:853px" width="12" height="10"><use href="#ck"/></svg>
<div class="t" style="left:115px;top:849px;color:#b5b5b5">test1()</div>
<div class="t s" style="left:285px;top:849px;color:#606365">23 ms</div>

<!-- console -->
<div style="left:323px;top:812px;width:1144px;height:95px;background:#2b2b2b"></div>
<div style="left:323px;top:812px;width:565px;height:20px;background:#343536"></div>
<div class="m" style="left:333px;top:812px;font-size:12px;color:#888">/Library/Java/JavaVirtualMachines/jdk1.8.0_181.jdk/Contents/Home/bin/java ...</div>
<div class="m" style="left:333px;top:832px;color:#bbb">test</div>
<div class="m" style="left:333px;top:872px;color:#bbb">Process finished with exit code 0</div>
<svg class="i" style="left:1475px;top:819px" width="10" height="12"><path d="M5 12V1M1 5l4-4 4 4" fill="none" stroke="#56595b" stroke-width="1.200"/></svg>
<svg class="i" style="left:1475px;top:843px" width="10" height="12"><path d="M5 0v11M1 7l4 4 4-4" fill="none" stroke="#56595b" stroke-width="1.200"/></svg>
<svg class="i" style="left:1474px;top:866px" width="12" height="13" viewBox="0 0 12 13"><path d="M1 2h10M1 6h9a2 2 0 0 1 0 4H6M8 8l-2 2 2 2M1 10h2" fill="none" stroke="#9a9d9f" stroke-width="1.200"/></svg>

<!-- tool window bar -->
<div style="left:0;top:907px;width:1512px;height:1px;background:#323232"></div>
<div class="t s" style="left:29px;top:908px;font-size:10.500px;padding-left:14px;color:#aaa">Problems</div>
<div style="left:30px;top:912px;width:9px;height:9px;border-radius:50%;background:#a6a9ab"></div>
<div style="left:112px;top:911px;width:4px;height:12px;background:#e8a92f"></div>
<div style="left:110px;top:911px;width:2px;height:4px;background:#3d8fdb"></div>
<div class="t" style="left:124px;top:908px;font-size:10.500px;color:#aaa">Sequence Diagram</div>
<svg class="i" style="left:237px;top:912px" width="9" height="11" viewBox="0 0 9 11"><path d="M2 0v11M2 7c4 0 5-2 5-5" fill="none" stroke="#a6a9ab" stroke-width="1.400"/></svg>
<div class="t" style="left:251px;top:908px;font-size:10.500px;color:#aaa">Git</div>
<svg class="i" style="left:282px;top:911px" width="11" height="11" viewBox="0 0 11 11"><circle cx="5" cy="5" r="4.300" fill="none" stroke="#a6a9ab"/><path d="M5 5l5 2-3 3z" fill="#a6a9ab"/></svg>
<div class="t" style="left:297px;top:908px;font-size:10.500px;color:#aaa">Profiler</div>
<div style="left:352px;top:912px;width:10px;height:9px;background:#a6a9ab"></div>
<div class="t" style="left:366px;top:908px;font-size:10.500px;color:#aaa">Terminal</div>
<svg class="i" style="left:426px;top:912px" width="10" height="9"><path d="M0 1h10M0 4.500h10M0 8h10" stroke="#a6a9ab"/></svg>
<div class="t" style="left:440px;top:908px;font-size:10.500px;color:#aaa">TODO</div>
<svg class="i" style="left:489px;top:911px" width="11" height="12" viewBox="0 0 11 12"><path d="M1 1h9v2H1zM1 5h9v2H1zM1 9h4v2H1z" fill="#a6a9ab"/></svg>
<div class="t" style="left:504px;top:908px;font-size:10.500px;color:#aaa">Database Changes</div>
<svg class="i" style="left:617px;top:911px" width="12" height="12" viewBox="0 0 12 12"><circle cx="6" cy="2" r="1.800" fill="#a6a9ab"/><circle cx="2" cy="9.500" r="2" fill="#a6a9ab"/><circle cx="10" cy="9.500" r="2" fill="#a6a9ab"/><path d="M6 2L2 9.500M6 2l4 7.500" stroke="#a6a9ab"/></svg>
<div class="t" style="left:633px;top:908px;font-size:10.500px;color:#aaa">Endpoints</div>
<svg class="i" style="left:700px;top:911px" width="11" height="11" viewBox="0 0 15 15"><path d="M1 5l4-4 3 2-4 4zM6 6l2-2 6 8-2 2z" fill="#a6a9ab"/></svg>
<div class="t" style="left:715px;top:908px;font-size:10.500px;color:#aaa">Build</div>
<svg class="i" style="left:759px;top:911px" width="11" height="12" viewBox="0 0 11 12"><path d="M5.500 0L11 3 5.500 6 0 3zM0 6l5.500 3L11 6M0 9l5.500 3L11 9" fill="#a6a9ab"/></svg>
<div class="t" style="left:774px;top:908px;font-size:10.500px;color:#aaa">Dependencies</div>
<svg class="i" style="left:862px;top:911px" width="11" height="11" viewBox="0 0 11 11"><path d="M11 0C9 6 6 10 1 10 0 5 4 2 11 0z" fill="#a6a9ab"/></svg>
<div class="t" style="left:877px;top:908px;font-size:10.500px;color:#aaa">Spring</div>
<svg class="i" style="left:1305px;top:911px" width="12" height="12" viewBox="0 0 12 12"><circle cx="6" cy="6" r="5.300" fill="none" stroke="#a6a9ab"/></svg>
<div class="t" style="left:1320px;top:908px;font-size:10.500px;color:#aaa">Event Log</div>
<div style="left:1389px;top:912px;width:9px;height:10px;border-radius:50%;background:#a6a9ab"></div>
<div class="t" style="left:1402px;top:908px;font-size:10.500px;color:#aaa">Debug</div>
<div style="left:1443px;top:908px;width:50px;height:18px;background:#333537"></div>
<svg class="i" style="left:1453px;top:913px" width="8" height="9"><path d="M0 0l8 4.500L0 9z" fill="#bcbec0"/></svg>
<div class="t" style="left:1466px;top:908px;font-size:10.500px;color:#ddd">Run</div>
<div class="t" style="left:1324px;top:899px;font-size:18px;color:rgba(190,190,190,.48)">@稀土掘金技术社区</div>

<!-- status bar -->
<svg class="i" style="left:5px;top:930px" width="12" height="12" viewBox="0 0 12 12"><rect x="2.500" y="1" width="9" height="8" fill="none" stroke="#8a8d8f"/><path d="M.5 3.500V11h9" fill="none" stroke="#8a8d8f"/></svg>
<div class="t" style="left:28px;top:928px;font-size:10.800px;color:#aaa">Class 'User' is never used</div>
<svg class="i" style="left:982px;top:930px" width="12" height="13" viewBox="0 0 12 13"><path d="M6 0l6 3v7l-6 3-6-3V3z" fill="#6b51c4"/><path d="M4 4l4 2.500L4 9z" fill="#2f6fa8"/></svg>
<div class="t" style="left:997px;top:928px;font-size:12.500px;color:#b5b5b5;letter-spacing:-.2px">tabnine <b style="color:#ddd">Starter</b></div>
<div class="t" style="left:1091px;top:928px;font-size:10.500px;color:#aaa;letter-spacing:.2px">6:16 (4 chars)</div>
<div class="t" style="left:1170px;top:928px;font-size:10.500px;color:#aaa">CRLF</div>
<div class="t" style="left:1206px;top:928px;font-size:10.500px;color:#aaa">UTF-8</div>
<div class="t" style="left:1248px;top:928px;font-size:10.500px;color:#aaa">2 spaces</div>
<svg class="i" style="left:1304px;top:930px" width="9" height="13" viewBox="0 0 9 11"><path d="M2 0v11M2 7c4 0 5-2 5-5" fill="none" stroke="#a6a9ab" stroke-width="1.300"/></svg>
<div class="t" style="left:1318px;top:928px;font-size:10.500px;color:#aaa">master</div>
<svg class="i" style="left:1361px;top:930px" width="9" height="12" viewBox="0 0 9 12"><path d="M2 5V2.500a2 2 0 0 1 4 0" fill="none" stroke="#a6a9ab"/><rect x="1" y="5" width="7" height="6" fill="#a6a9ab"/></svg>
<svg class="i" style="left:1383px;top:930px" width="13" height="12" viewBox="0 0 13 12"><path d="M2 0h7v8H2zM0 11h11" fill="none" stroke="#7a7d7f" stroke-width="1.300"/></svg>
<div style="left:1407px;top:931px;width:11px;height:11px;border-radius:50%;background:#c75450"></div>
<div style="left:1424px;top:926px;width:88px;height:19px;background:#5a5d5f"></div>
<div style="left:1424px;top:926px;width:48px;height:19px;background:#6b6e70"></div>
<div class="t" style="left:1430px;top:928px;font-size:10.500px;color:#c5c5c5">1169 of 2048M</div>
</div></body></html>
